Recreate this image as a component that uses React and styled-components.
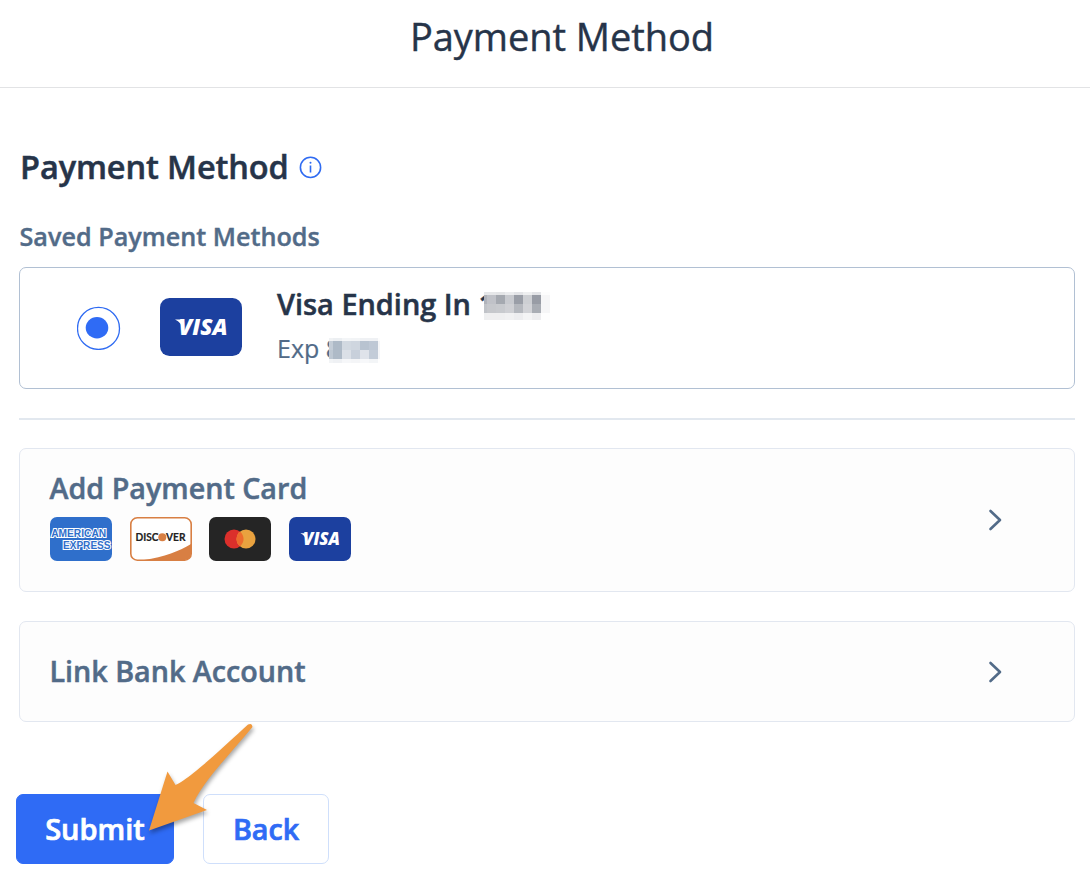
import React from 'react'
import styled, { createGlobalStyle } from 'styled-components'

const GlobalStyle = createGlobalStyle`
  * {
    box-sizing: border-box;
  }
  body {
    margin: 0;
    background: #fff;
    font-family: 'Open Sans', 'Noto Sans', sans-serif;
    color: #263449;
  }
`

const Page = styled.div`
  position: relative;
  width: 1090px;
  height: 878px;
  overflow: hidden;
`

const Header = styled.header`
  display: flex;
  align-items: center;
  justify-content: center;
  height: 88px;
  padding: 0 0 16px 34px;
  border-bottom: 1px solid #e2e3e5;
`

const HeaderTitle = styled.h1`
  margin: 0;
  font-size: 38px;
  font-weight: 400;
  line-height: 52px;
  letter-spacing: -0.05px;
  -webkit-text-stroke: 0.4px;
`

const Content = styled.main`
  display: flex;
  flex-direction: column;
  padding: 55px 15px 0 19px;
`

const SectionHeading = styled.div`
  display: flex;
  align-items: center;
  gap: 10.5px;
  height: 48px;
`

const SectionTitle = styled.h2`
  margin: 0;
  padding-left: 1px;
  font-size: 32.5px;
  font-weight: 600;
  line-height: 48px;
  letter-spacing: -0.1px;
  -webkit-text-stroke: 0.5px;
`

const SubTitle = styled.h3`
  margin: 27px 0 13px;
  padding-left: 0.5px;
  font-size: 25.2px;
  font-weight: 600;
  line-height: 36px;
  color: #526b88;
  -webkit-text-stroke: 0.4px;
`

const SavedCard = styled.div`
  display: flex;
  align-items: center;
  height: 122px;
  padding-left: 57px;
  border: 1px solid #b1c0d3;
  border-radius: 7px;
`

const Radio = styled.svg`
  display: block;
`

const VisaSlot = styled.div`
  display: flex;
  margin: 0 35px 3px 39px;
`

const SavedText = styled.div`
  display: flex;
  flex-direction: column;
  margin-bottom: 9px;
`

const SavedLine = styled.div`
  display: flex;
  align-items: center;
  height: ${p => (p.$small ? '41px' : '48px')};
  font-size: ${p => (p.$small ? '25px' : '28.9px')};
  font-weight: ${p => (p.$small ? 400 : 600)};
  color: ${p => (p.$small ? '#526b88' : '#263449')};
  white-space: pre;
  -webkit-text-stroke: ${p => (p.$small ? '0.2px' : '0.5px')};
`

const Mosaic = styled.div`
  position: relative;
  display: grid;
  grid-template-columns: ${p => p.$cols};
  grid-template-rows: ${p => p.$rows};
  margin-left: ${p => p.$pull}px;
  margin-top: ${p => p.$drop}px;
`

const Cell = styled.div`
  background: ${p => p.$tone};
`

const Divider = styled.hr`
  width: 100%;
  height: 2px;
  margin: 29px 0 28px;
  border: 0;
  background: #e2e8ef;
`

const Option = styled.div`
  display: flex;
  align-items: center;
  justify-content: space-between;
  height: ${p => p.$height}px;
  margin-bottom: 29px;
  padding: 0 72px 0 29.5px;
  border: 1px solid #e2e7f0;
  border-radius: 7px;
  background: #fdfdfd;
`

const OptionBody = styled.div`
  display: flex;
  flex-direction: column;
  margin-bottom: 12px;
`

const OptionTitle = styled.div`
  margin-bottom: ${p => (p.$raised ? 2 : 0)}px;
  font-size: 28.7px;
  font-weight: 600;
  line-height: 40px;
  color: #526b88;
  -webkit-text-stroke: 0.5px;
`

const CardRow = styled.div`
  display: flex;
  gap: 17.5px;
  margin-top: 9px;
  padding-left: 0.9px;
`

const Actions = styled.div`
  display: flex;
  gap: 29px;
  margin: 43px 0 0 -3px;
`

const Button = styled.button`
  width: ${p => (p.$primary ? '158px' : '126px')};
  height: 70px;
  padding: 0 0 2px;
  border: 1px solid ${p => (p.$primary ? '#2f6bf5' : '#cfdffb')};
  border-radius: 7px;
  background: ${p => (p.$primary ? '#2f6bf5' : '#fff')};
  color: ${p => (p.$primary ? '#fff' : '#2f6bf5')};
  font-family: inherit;
  font-size: ${p => (p.$primary ? '29px' : '28.7px')};
  font-weight: 600;
  -webkit-text-stroke: 0.7px;
`

const Arrow = styled.svg`
  position: absolute;
  left: 140px;
  top: 715px;
  filter: drop-shadow(1px 3px 2px rgba(0, 0, 0, 0.35));
`

const InfoIcon = () => (
  <svg width="24" height="24" viewBox="0 0 24 24" fill="none" stroke="#2f6bf2">
    <circle cx="11.500" cy="12.400" r="10.100" strokeWidth="1.600" />
    <path d="M11.500 10.500v7" strokeWidth="1.600" />
    <circle cx="11.500" cy="7.700" r="1" fill="#2f6bf2" stroke="none" />
  </svg>
)

const Chevron = () => (
  <svg width="14" height="22" viewBox="0 0 14 22" fill="none" stroke="#526b88" strokeWidth="2.6" strokeLinecap="round" strokeLinejoin="round">
    <path d="M2.500 2l9.500 9L2.500 20" />
  </svg>
)

const VisaCard = ({ width, height }) => (
  <svg width={width} height={height} viewBox="0 0 82 58" preserveAspectRatio="none">
    <rect width="82" height="58" rx="9.500" fill="#1c409f" />
    <path d="M15 21.500h6l3 6.500-1 3c-1-4-3.500-7.500-8-9.500z" fill="#fff" />
    <text x="18.500" y="37" textLength="49" lengthAdjust="spacingAndGlyphs" fontFamily="Open Sans" fontSize="22" fontWeight="800" fontStyle="italic" fill="#fff">VISA</text>
  </svg>
)

const AmexCard = () => (
  <svg width="62" height="44" viewBox="0 0 62 44">
    <rect width="62" height="44" rx="7" fill="#2f6fcb" />
    <g fontFamily="Liberation Sans" fontWeight="700" fontSize="10.500" fill="#2f6fcb" stroke="#fff" strokeWidth="2.200" paintOrder="stroke">
      <text x="1.200" y="19.600" textLength="55" lengthAdjust="spacingAndGlyphs">AMERICAN</text>
      <text x="13" y="32" textLength="47.500" lengthAdjust="spacingAndGlyphs">EXPRESS</text>
    </g>
  </svg>
)

const DiscoverCard = () => (
  <svg width="62" height="44" viewBox="0 0 62 44">
    <rect x="1" y="1" width="60" height="42" rx="6.500" fill="#fff" />
    <path d="M61 27C50 34 34 40 14 43h41a6 6 0 0 0 6-6z" fill="#d87f43" />
    <rect x="0.800" y="0.800" width="60.400" height="42.400" rx="6.500" fill="none" stroke="#d87f43" strokeWidth="1.600" />
    <g fontFamily="Lato" fontWeight="700" fontSize="10.800" fill="#222" stroke="#222" strokeWidth="0.200">
      <text x="5.500" y="24.200" textLength="23" lengthAdjust="spacingAndGlyphs">DISC</text>
      <text x="36" y="24.200" textLength="19.500" lengthAdjust="spacingAndGlyphs">VER</text>
    </g>
    <circle cx="32.300" cy="20.300" r="4" fill="#d87f43" />
  </svg>
)

const MasterCard = () => (
  <svg width="62" height="44" viewBox="0 0 62 44">
    <rect width="62" height="44" rx="7" fill="#252525" />
    <circle cx="25" cy="22" r="9.500" fill="#db2f2b" />
    <circle cx="37" cy="22" r="9.500" fill="#e9a23f" />
    <path d="M31 14.600a9.500 9.500 0 0 1 0 14.800a9.500 9.500 0 0 1 0-14.800z" fill="#ed6b2d" />
  </svg>
)

const numberTones = [
  '#e6e7e9', '#e6e7e9', '#e4e5e7', '#ebecee', '#e3e4e7', '#eeeff0', '#e3e4e7', '#fdfdfd',
  '#b0b3ba', '#c0c2c8', '#a5a9b0', '#c8cacf', '#9a9ea7', '#cdcfd3', '#989ca5', '#f6f6f7',
  '#c0c3c8', '#c6c8cc', '#c8cace', '#cfd0d4', '#b5b8be', '#d2d3d7', '#a9adb4', '#f6f6f7',
  '#eeeff0', '#efeff0', '#efeff0', '#f1f1f2', '#ededef', '#f4f4f5', '#ededef', '#fefefe',
]

const expiryTones = [
  '#f0f2f4', '#eceff2', '#f3f5f7', '#f2f4f6', '#eff1f4', '#eff1f4', '#fdfdfd',
  '#c4cdd7', '#aebac7', '#d2d9e1', '#cfd6df', '#b8c3d0', '#bec8d5', '#f5f6f8',
  '#bec8d3', '#aebac7', '#dbe0e7', '#c8d0db', '#dfe3ea', '#c3ccd8', '#f5f6f8',
  '#f2f4f6', '#eff1f4', '#f6f7f9', '#f4f5f7', '#f7f8fa', '#f3f5f7', '#fefefe',
]

export default function App() {
  return (
    <>
      <GlobalStyle />
      <Page>
        <Header>
          <HeaderTitle>Payment Method</HeaderTitle>
        </Header>
        <Content>
          <SectionHeading>
            <SectionTitle>Payment Method</SectionTitle>
            <InfoIcon />
          </SectionHeading>
          <SubTitle>Saved Payment Methods</SubTitle>
          <SavedCard>
            <Radio width="44" height="44" viewBox="0 0 44 44">
              <circle cx="21.500" cy="22.400" r="21" fill="#fff" stroke="#2f6bf2" strokeWidth="1.300" />
              <ellipse cx="20" cy="21.800" rx="11.300" ry="10.700" fill="#2f6bf5" />
            </Radio>
            <VisaSlot>
              <VisaCard width={82} height={58} />
            </VisaSlot>
            <SavedText>
              <SavedLine>
                Visa Ending In 1
                <Mosaic $cols="3px repeat(7, 9px)" $rows="3px 9px 9px 7px" $pull={-10.5} $drop={6}>
                  {numberTones.map((tone, i) => <Cell key={i} $tone={tone} />)}
                </Mosaic>
              </SavedLine>
              <SavedLine $small>
                Exp 8
                <Mosaic $cols="4px repeat(5, 9px) 2px" $rows="3px 9px 9px 4px" $pull={-11.5} $drop={5}>
                  {expiryTones.map((tone, i) => <Cell key={i} $tone={tone} />)}
                </Mosaic>
              </SavedLine>
            </SavedText>
          </SavedCard>
          <Divider />
          <Option $height={144}>
            <OptionBody>
              <OptionTitle>Add Payment Card</OptionTitle>
              <CardRow>
                <AmexCard />
                <DiscoverCard />
                <MasterCard />
                <VisaCard width={62} height={44} />
              </CardRow>
            </OptionBody>
            <Chevron />
          </Option>
          <Option $height={101}>
            <OptionTitle $raised>Link Bank Account</OptionTitle>
            <Chevron />
          </Option>
          <Actions>
            <Button $primary>Submit</Button>
            <Button>Back</Button>
          </Actions>
        </Content>
        <Arrow width="125" height="130" viewBox="140 715 125 130">
          <path d="M149 830.500L167.500 771.500L175.500 785C190 779 230 741 248 724.500Q252 722.500 252.500 727C232 752 204 780 193.500 803L207 810Z" fill="#f19a3e" />
        </Arrow>
      </Page>
    </>
  )
}
